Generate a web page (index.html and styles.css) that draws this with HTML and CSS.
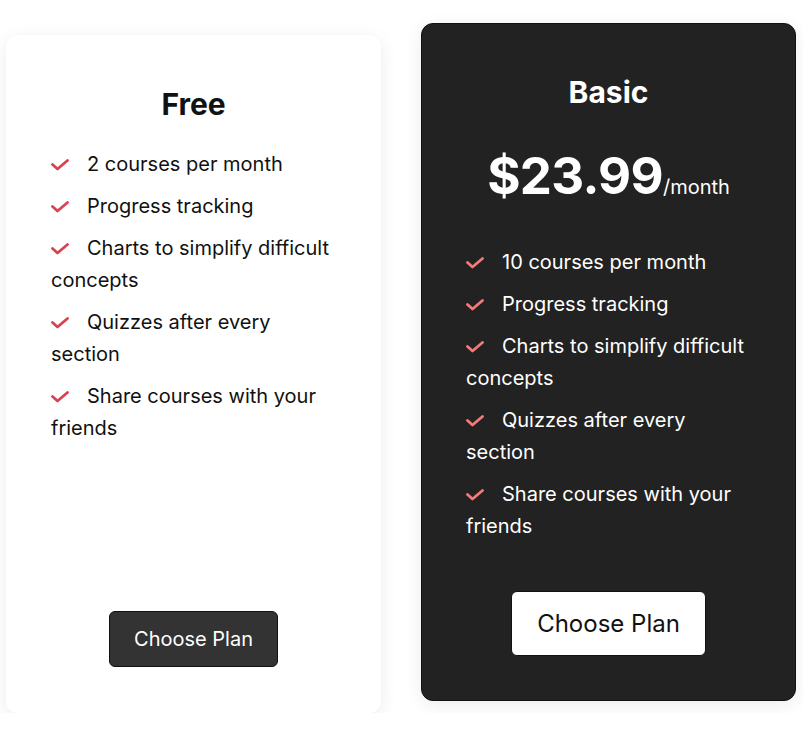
FILE: index.html
```html
<!DOCTYPE html>
<html lang="en">
<head>
    <meta charset="UTF-8">
    <meta name="viewport" content="width=device-width, initial-scale=1.0">
    <title>Pricing</title>
    <link rel="stylesheet" href="styles.css">
</head>
<body>
    <div class="plans">
        <div class="plan plan-free">
            <h2>Free</h2>
            <ul class="features">
                <li><svg class="check" viewBox="0 0 18 12"><path d="M1.5 5.5 L6.5 10 L16.5 1.5"/></svg>2 courses per month</li>
                <li><svg class="check" viewBox="0 0 18 12"><path d="M1.5 5.5 L6.5 10 L16.5 1.5"/></svg>Progress tracking</li>
                <li><svg class="check" viewBox="0 0 18 12"><path d="M1.5 5.5 L6.5 10 L16.5 1.5"/></svg>Charts to simplify difficult concepts</li>
                <li><svg class="check" viewBox="0 0 18 12"><path d="M1.5 5.5 L6.5 10 L16.5 1.5"/></svg>Quizzes after every section</li>
                <li><svg class="check" viewBox="0 0 18 12"><path d="M1.5 5.5 L6.5 10 L16.5 1.5"/></svg>Share courses with your friends</li>
            </ul>
            <button class="choose">Choose Plan</button>
        </div>

        <div class="plan plan-basic">
            <h2>Basic</h2>
            <p class="price">$23.99<span>/month</span></p>
            <ul class="features">
                <li><svg class="check" viewBox="0 0 18 12"><path d="M1.5 5.5 L6.5 10 L16.5 1.5"/></svg>10 courses per month</li>
                <li><svg class="check" viewBox="0 0 18 12"><path d="M1.5 5.5 L6.5 10 L16.5 1.5"/></svg>Progress tracking</li>
                <li><svg class="check" viewBox="0 0 18 12"><path d="M1.5 5.5 L6.5 10 L16.5 1.5"/></svg>Charts to simplify difficult concepts</li>
                <li><svg class="check" viewBox="0 0 18 12"><path d="M1.5 5.5 L6.5 10 L16.5 1.5"/></svg>Quizzes after every section</li>
                <li><svg class="check" viewBox="0 0 18 12"><path d="M1.5 5.5 L6.5 10 L16.5 1.5"/></svg>Share courses with your friends</li>
            </ul>
            <button class="choose">Choose Plan</button>
        </div>
    </div>
</body>
</html>
```

FILE: styles.css
```css
body {
    font-family: Inter, 'Noto Sans', sans-serif;
    background-color: #fff;
    margin: 0;
    padding: 23px 7px 0 6px;
}

.plans {
    display: flex;
    gap: 40px;
    align-items: stretch;
}

.plan {
    width: 375px;
    box-sizing: border-box;
    border-radius: 12px;
    display: flex;
    flex-direction: column;
}

.plan-free {
    margin-top: 12px;
    padding: 52px 45px 46px;
    background-color: #fff;
    color: #111;
    box-shadow: 0 4px 18px rgba(0, 0, 0, 0.08);
}

.plan-basic {
    margin-bottom: 12px;
    padding: 51px 44px 44px;
    background-color: #222;
    color: #fff;
    border: 1px solid #111;
    box-shadow: 0 4px 18px rgba(0, 0, 0, 0.08);
}

h2 {
    margin: 0;
    font-size: 30px;
    font-weight: 700;
    line-height: 35px;
    text-align: center;
}

.plan-free h2 {
    margin-bottom: 26px;
}

.price {
    margin: 33px 0 26px;
    font-size: 51px;
    font-weight: 700;
    line-height: 66px;
    text-align: center;
    letter-spacing: -0.7px;
}

.price span {
    font-size: 20px;
    font-weight: 400;
    letter-spacing: 0;
}

.features {
    list-style: none;
    margin: 0 0 39px;
    padding: 0;
    font-size: 20px;
    line-height: 32px;
}

.features li {
    margin-bottom: 10px;
}

.check {
    width: 18px;
    height: 12px;
    margin-right: 18px;
    fill: none;
    stroke: #d9434f;
    stroke-width: 2.8;
    stroke-linecap: round;
    stroke-linejoin: round;
}

.plan-basic .check {
    stroke: #f47a7a;
}

.choose {
    margin: auto auto 0;
    font-family: inherit;
    border: 1px solid #111;
    border-radius: 6px;
    cursor: pointer;
}

.plan-free .choose {
    background-color: #333;
    color: #fff;
    font-size: 20px;
    padding: 15px 24px;
}

.plan-basic .choose {
    background-color: #fff;
    color: #111;
    font-size: 24px;
    padding: 17px 25px;
}
```
